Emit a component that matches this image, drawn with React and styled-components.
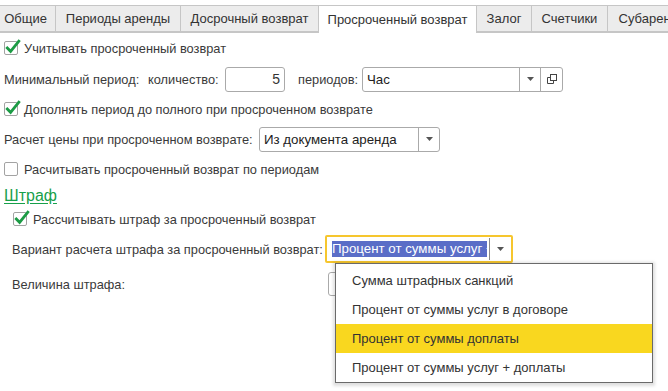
import React from "react";
import styled, { createGlobalStyle } from "styled-components";

const Global = createGlobalStyle`
  html, body { margin: 0; padding: 0; background: #fff; }
  body {
    font-family: "Liberation Sans", Arial, sans-serif;
    font-size: 12.8px;
    color: #3a3a3a;
    width: 668px;
    height: 391px;
    overflow: hidden;
  }
`;

const Page = styled.div`
  position: relative;
  width: 668px;
  height: 391px;
  overflow: hidden;
`;

const TabBar = styled.div`
  display: flex;
  align-items: flex-end;
  height: 28px;
  margin-top: 5px;
  box-sizing: border-box;
  border-bottom: 1px solid #c6c6c6;
  white-space: nowrap;
`;

const Tab = styled.div`
  flex: none;
  box-sizing: border-box;
  width: ${(p) => p.$w}px;
  height: ${(p) => (p.$active ? 28 : 27)}px;
  margin-bottom: ${(p) => (p.$active ? -1 : 0)}px;
  margin-left: ${(p) => (p.$first ? -5 : -1)}px;
  border: 1px solid #c6c6c6;
  border-bottom: ${(p) => (p.$active ? "none" : "1px solid #c6c6c6")};
  background: ${(p) => (p.$active ? "#fff" : "#ececec")};
  display: flex;
  align-items: center;
  justify-content: center;
  color: #333;
  font-size: 13px;
  position: relative;
  z-index: ${(p) => (p.$active ? 1 : 0)};
`;

const Form = styled.div`
  display: flex;
  flex-direction: column;
`;

const Row = styled.div`
  display: flex;
  align-items: center;
  height: ${(p) => p.$h}px;
  padding-left: ${(p) => p.$pl || 4}px;
  white-space: nowrap;
`;

const Label = styled.span`
  flex: none;
  width: ${(p) => (p.$w ? `${p.$w}px` : "auto")};
  margin-left: ${(p) => p.$ml || 0}px;
  color: #3a3a3a;
`;

const CheckRow = styled.label`
  display: flex;
  align-items: center;
  gap: 6px;
`;

const Box = styled.span`
  position: relative;
  flex: none;
  width: 14px;
  height: 14px;
  box-sizing: border-box;
  border: 1px solid #a3a3a3;
  border-radius: 2px;
  background: #fff;
`;

const Tick = styled.svg`
  position: absolute;
  left: 0px;
  top: -3px;
  width: 16px;
  height: 16px;
  overflow: visible;
`;

const Checkbox = ({ checked, children }) => (
  <CheckRow>
    <Box>
      {checked && (
        <Tick viewBox="0 0 16 16">
          <path
            d="M2.3 9 L5.6 12.3 L13.8 2.2"
            fill="none"
            stroke="#1c9b45"
            strokeWidth="2.8"
            strokeLinecap="square"
          />
        </Tick>
      )}
    </Box>
    <span>{children}</span>
  </CheckRow>
);

const NumInput = styled.div`
  flex: none;
  box-sizing: border-box;
  width: ${(p) => p.$w}px;
  height: ${(p) => p.$h || 25}px;
  border: 1px solid #aaa;
  border-radius: 3px;
  display: flex;
  align-items: center;
  justify-content: flex-end;
  padding-right: 4px;
  font-size: 14px;
  color: #333;
  background: #fff;
`;

const Select = styled.div`
  flex: none;
  box-sizing: border-box;
  width: ${(p) => p.$w}px;
  height: 25px;
  border: 1px solid #aaa;
  border-radius: 3px;
  display: flex;
  align-items: stretch;
  background: #fff;
`;

const SelectText = styled.div`
  flex: 1;
  display: flex;
  align-items: center;
  padding-left: 4px;
  color: #222;
  font-size: 13.3px;
`;

const SelectBtn = styled.div`
  flex: none;
  width: ${(p) => p.$w || 20}px;
  border-left: 1px solid #aaa;
  display: flex;
  align-items: center;
  justify-content: center;
`;

const Arrow = () => (
  <svg width="7" height="4" viewBox="0 0 7 4">
    <path d="M0 0 H7 L3.5 4 Z" fill="#555" />
  </svg>
);

const OpenIcon = () => (
  <svg width="11" height="11" viewBox="0 0 11 11">
    <rect x="4.5" y="0.5" width="6" height="6" fill="none" stroke="#444" strokeWidth="1" />
    <path d="M4.5 3.5 H1.5 V9.5 H7.5 V6.5" fill="none" stroke="#444" strokeWidth="1" />
  </svg>
);

const Heading = styled.div`
  font-size: 16px;
  color: #17a04a;
  text-decoration: underline;
  text-decoration-color: #17a04a;
  text-underline-offset: 2px;
`;

const FocusSelect = styled.div`
  flex: none;
  box-sizing: border-box;
  width: 188px;
  height: 28px;
  border: 2px solid #f6c62e;
  border-radius: 2px;
  display: flex;
  align-items: center;
  background: #fff;
`;

const FocusText = styled.div`
  flex: none;
  width: 162px;
  padding-left: 5px;
  box-sizing: border-box;
`;

const Highlight = styled.div`
  width: 155px;
  height: 16px;
  line-height: 16px;
  background: #5a6dc7;
  color: #fff;
  overflow: hidden;
  white-space: nowrap;
  font-size: 13.3px;
`;

const FocusBtn = styled.div`
  flex: 1;
  height: 22px;
  border-left: 1px solid #8a8a8a;
  display: flex;
  align-items: center;
  justify-content: center;
`;

const Popup = styled.div`
  position: absolute;
  left: 335px;
  top: 263px;
  width: 318px;
  box-sizing: border-box;
  border: 1px solid #6a6a6a;
  background: #fff;
  padding-top: 2px;
  box-shadow: 0 1px 3px 2px rgba(0, 0, 0, 0.13);
  z-index: 5;
`;

const Item = styled.div`
  height: 29px;
  display: flex;
  align-items: center;
  padding-left: 16px;
  background: ${(p) => (p.$active ? "#f9d71f" : "transparent")};
  color: #333;
  font-size: 13px;
  white-space: nowrap;
`;

const tabs = [
  { t: "Общие", w: 61 },
  { t: "Периоды аренды", w: 126 },
  { t: "Досрочный возврат", w: 139 },
  { t: "Просроченный возврат", w: 159, active: true },
  { t: "Залог", w: 56 },
  { t: "Счетчики", w: 77 },
  { t: "Субаренда", w: 90 },
];

const items = [
  "Сумма штрафных санкций",
  "Процент от суммы услуг в договоре",
  "Процент от суммы доплаты",
  "Процент от суммы услуг + доплаты",
];

export default function App() {
  return (
    <Page>
      <Global />
      <TabBar>
        {tabs.map((t, i) => (
          <Tab key={t.t} $w={t.w} $active={t.active} $first={i === 0}>
            {t.t}
          </Tab>
        ))}
      </TabBar>
      <Form>
        <Row $h={30}>
          <Checkbox checked>Учитывать просроченный возврат</Checkbox>
        </Row>
        <Row $h={32}>
          <Label $w={144}>Минимальный период:</Label>
          <Label $w={77}>количество:</Label>
          <NumInput $w={60}>5</NumInput>
          <Label $w={64} $ml={13}>периодов:</Label>
          <Select $w={201}>
            <SelectText>Час</SelectText>
            <SelectBtn $w={20}>
              <Arrow />
            </SelectBtn>
            <SelectBtn $w={21}>
              <OpenIcon />
            </SelectBtn>
          </Select>
        </Row>
        <Row $h={28}>
          <Checkbox checked>Дополнять период до полного при просроченном возврате</Checkbox>
        </Row>
        <Row $h={32}>
          <Label $w={255}>Расчет цены при просроченном возврате:</Label>
          <Select $w={181}>
            <SelectText>Из документа аренда</SelectText>
            <SelectBtn $w={20}>
              <Arrow />
            </SelectBtn>
          </Select>
        </Row>
        <Row $h={28}>
          <Checkbox>Расчитывать просроченный возврат по периодам</Checkbox>
        </Row>
        <Row $h={26}>
          <Heading>Штраф</Heading>
        </Row>
        <Row $h={20} $pl={13}>
          <Checkbox checked>Рассчитывать штраф за просроченный возврат</Checkbox>
        </Row>
        <Row $h={40} $pl={12}>
          <Label $w={313}>Вариант расчета штрафа за просроченный возврат:</Label>
          <FocusSelect>
            <FocusText>
              <Highlight>Процент от суммы услуг + доплаты</Highlight>
            </FocusText>
            <FocusBtn>
              <Arrow />
            </FocusBtn>
          </FocusSelect>
        </Row>
        <Row $h={30} $pl={12}>
          <Label $w={316}>Величина штрафа:</Label>
          <NumInput $w={100} $h={24} />
        </Row>
      </Form>
      <Popup>
        {items.map((it, i) => (
          <Item key={it} $active={i === 2}>
            {it}
          </Item>
        ))}
      </Popup>
    </Page>
  );
}
